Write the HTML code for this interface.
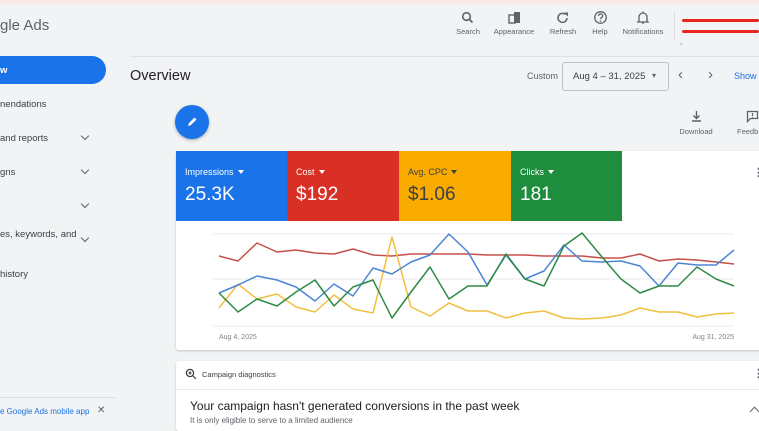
<!DOCTYPE html>
<html><head><meta charset="utf-8"><style>
*{margin:0;padding:0;box-sizing:border-box}
body{width:759px;height:427px;overflow:hidden;background:#f1f3f4;font-family:"Liberation Sans",sans-serif;color:#3c4043;position:relative}
.a{position:absolute;white-space:nowrap}
.hl{font-size:7.5px;color:#5f6368;text-align:center;width:60px}
.nav{font-size:9.5px;color:#3c4043}
.chev{position:absolute;width:6px;height:6px;border-right:1.3px solid #5f6368;border-bottom:1.3px solid #5f6368;transform:rotate(45deg)}
.tile{position:absolute;top:151px;height:70px;width:112px;color:#fff}
.tile .l{position:absolute;left:9px;top:16px;font-size:9px}
.tile .v{position:absolute;left:9px;top:33px;font-size:19px}
.tri{display:inline-block;width:0;height:0;border-left:3.5px solid transparent;border-right:3.5px solid transparent;border-top:4px solid currentColor;margin-left:4px;vertical-align:1px}
</style></head><body>
<div class="a" style="left:0;top:0;width:759px;height:4px;background:#fce8e6"></div>
<div class="a" style="left:0;top:17px;font-size:15px;color:#5f6368">gle Ads</div>

<svg class="a" style="left:460px;top:11px" width="16" height="14" viewBox="0 0 16 14"><circle cx="6.5" cy="5.5" r="3.8" fill="none" stroke="#5f6368" stroke-width="1.6"/><path d="M9.3 8.3L12.5 11.5" stroke="#5f6368" stroke-width="1.8"/></svg>
<div class="a hl" style="left:438px;top:27px">Search</div>
<svg class="a" style="left:507px;top:11px" width="16" height="14" viewBox="0 0 16 14"><rect x="2" y="4" width="6" height="8" fill="none" stroke="#5f6368" stroke-width="1.4"/><rect x="7" y="1" width="6" height="11" fill="#5f6368"/></svg>
<div class="a hl" style="left:484px;top:27px">Appearance</div>
<svg class="a" style="left:556px;top:11px" width="14" height="14" viewBox="0 0 14 14"><path d="M11 7A4.5 4.5 0 1 1 9.5 3.5" fill="none" stroke="#5f6368" stroke-width="1.5"/><path d="M8 1.5H12V5.5Z" fill="#5f6368"/></svg>
<div class="a hl" style="left:533px;top:27px">Refresh</div>
<svg class="a" style="left:593px;top:10px" width="15" height="15" viewBox="0 0 15 15"><circle cx="7.5" cy="7.5" r="5.8" fill="none" stroke="#5f6368" stroke-width="1.3"/><path d="M5.6 6a2 2 0 1 1 2.6 1.8c-.6.3-.7.7-.7 1.3" fill="none" stroke="#5f6368" stroke-width="1.3"/><circle cx="7.5" cy="11" r=".8" fill="#5f6368"/></svg>
<div class="a hl" style="left:570px;top:27px">Help</div>
<svg class="a" style="left:636px;top:10px" width="14" height="15" viewBox="0 0 14 15"><path d="M3 11V7a4 4 0 0 1 8 0v4l1 1H2z" fill="none" stroke="#5f6368" stroke-width="1.3"/><path d="M6 13h2" stroke="#5f6368" stroke-width="1.3"/><path d="M7 1.5v1.5" stroke="#5f6368" stroke-width="1.3"/></svg>
<div class="a hl" style="left:613px;top:27px">Notifications</div>
<div class="a" style="left:674px;top:12px;width:1px;height:28px;background:#dadce0"></div>
<div class="a" style="left:682px;top:19px;width:77px;height:3px;background:#e8261e;border-radius:2px"></div>
<div class="a" style="left:682px;top:30px;width:77px;height:3px;background:#e8261e;border-radius:2px"></div>
<div class="a" style="left:680px;top:44px;font-size:7px;color:#1a73e8">ˇ</div>
<div class="a" style="left:130px;top:56px;width:629px;height:1px;background:#dfe1e5"></div>

<div class="a" style="left:-20px;top:56px;width:126px;height:28px;background:#1a73e8;border-radius:14px"></div>
<div class="a nav" style="left:0;top:65px;color:#fff;font-weight:bold">w</div>
<div class="a nav" style="left:0;top:99px">nendations</div>
<div class="a nav" style="left:0;top:133px">and reports</div><div class="chev" style="left:82px;top:133px"></div>
<div class="a nav" style="left:0;top:167px">gns</div><div class="chev" style="left:82px;top:167px"></div>
<div class="chev" style="left:82px;top:201px"></div>
<div class="a nav" style="left:0;top:229px">es, keywords, and</div><div class="chev" style="left:82px;top:235px"></div>
<div class="a nav" style="left:0;top:269px">history</div>
<div class="a" style="left:0;top:397px;width:115px;height:1px;background:#dadce0"></div>
<div class="a" style="left:0;top:407px;font-size:8px;color:#1a73e8">e Google Ads mobile app</div>
<div class="a" style="left:97px;top:405px;font-size:10px;color:#5f6368">✕</div>

<div class="a" style="left:130px;top:68px;font-size:14.5px;color:#202124">Overview</div>
<div class="a" style="left:527px;top:71px;font-size:9px;color:#5f6368">Custom</div>
<div class="a" style="left:562px;top:62px;width:107px;height:29px;border:1px solid #bdc1c6;border-radius:3px"></div>
<div class="a" style="left:573px;top:71px;font-size:9.5px;color:#3c4043">Aug 4 – 31, 2025</div>
<div class="a" style="left:652px;top:71px;font-size:8px;color:#5f6368">▾</div>
<div class="a" style="left:678px;top:66px;font-size:15px;color:#5f6368">‹</div>
<div class="a" style="left:708px;top:66px;font-size:15px;color:#5f6368">›</div>
<div class="a" style="left:734px;top:71px;font-size:9px;color:#1a73e8">Show</div>

<div class="a" style="left:175px;top:105px;width:34px;height:34px;border-radius:50%;background:#1a73e8;box-shadow:0 1px 3px rgba(0,0,0,.3)"></div>
<svg class="a" style="left:185px;top:115px" width="14" height="14" viewBox="0 0 14 14"><path d="M3 11L4 8L9.5 2.5L11.5 4.5L6 10Z" fill="#fff"/></svg>
<svg class="a" style="left:690px;top:110px" width="13" height="13" viewBox="0 0 13 13"><path d="M6.5 1v7M3.5 5.5l3 3 3-3M2 11h9" fill="none" stroke="#5f6368" stroke-width="1.4"/></svg>
<div class="a hl" style="left:666px;top:127px">Download</div>
<svg class="a" style="left:746px;top:110px" width="13" height="13" viewBox="0 0 13 13"><path d="M1.5 1.5h10v7h-7l-3 3z" fill="none" stroke="#5f6368" stroke-width="1.3"/><path d="M6.5 3v3M6.5 7v.8" stroke="#5f6368" stroke-width="1.2"/></svg>
<div class="a" style="left:737px;top:127px;font-size:7.5px;color:#5f6368">Feedb</div>

<div class="a" style="left:176px;top:151px;width:600px;height:199px;background:#fff;border-radius:3px;box-shadow:0 1px 2px rgba(0,0,0,.2)"></div>
<div class="tile" style="left:176px;background:#1a73e8"><div class="l">Impressions<span class="tri"></span></div><div class="v">25.3K</div></div>
<div class="tile" style="left:287px;background:#d93025"><div class="l">Cost<span class="tri"></span></div><div class="v">$192</div></div>
<div class="tile" style="left:399px;background:#f9ab00;color:#3c4043"><div class="l">Avg. CPC<span class="tri"></span></div><div class="v">$1.06</div></div>
<div class="tile" style="left:511px;background:#1e8e3e;width:111px"><div class="l">Clicks<span class="tri"></span></div><div class="v">181</div></div>
<div class="a" style="left:753px;top:166px;font-size:11px;font-weight:bold;color:#5f6368">⋮</div>

<svg class="a" style="left:0;top:0" width="759" height="427">
<g stroke="#e8eaed" stroke-width="1"><line x1="213" y1="234" x2="734" y2="234"/><line x1="213" y1="279" x2="734" y2="279"/><line x1="213" y1="326" x2="734" y2="326"/></g>
<g fill="none" stroke-width="1.5" stroke-linejoin="round">
<polyline stroke="#c5504a" points="219,256 238,261 257,243 277,252 296,250 315,253 334,254 353,249 373,255 392,256 411,254 430,254 449,254 468,254 487,255 506,255 525,255 544,256 564,256 582,256 602,258 621,258 640,254 659,261 678,259 697,260 716,262 734,264"/>
<polyline stroke="#f2c040" points="219,308 238,284 257,299 277,294 296,307 315,312 334,295 353,309 373,313 392,237 411,307 430,316 449,303 468,311 487,311 506,318 525,313 544,311 564,318 582,319 602,318 621,315 640,308 659,312 678,312 697,317 716,314 734,313"/>
<polyline stroke="#4a86d4" points="219,293 238,285 257,276 277,280 296,287 315,301 334,284 353,296 373,268 392,274 411,262 430,255 449,234 468,252 487,285 506,255 525,279 544,271 564,245 582,261 602,262 621,261 640,266 659,286 678,263 697,265 716,265 734,250"/>
<polyline stroke="#2f8a46" points="219,293 238,312 257,299 277,306 296,292 315,280 334,306 353,287 373,280 392,318 411,292 430,267 449,299 468,286 487,286 506,254 525,279 544,286 564,246 582,233 602,257 621,279 640,293 659,286 678,286 697,267 716,279 734,286"/>
</g>
<text x="219" y="339" font-size="7" fill="#80868b" font-family="Liberation Sans">Aug 4, 2025</text>
<text x="734" y="339" font-size="7" fill="#80868b" font-family="Liberation Sans" text-anchor="end">Aug 31, 2025</text>
</svg>

<div class="a" style="left:176px;top:361px;width:600px;height:70px;background:#fff;border-radius:3px;box-shadow:0 1px 2px rgba(0,0,0,.2)"></div>
<div class="a" style="left:176px;top:389px;width:600px;height:1px;background:#e8eaed"></div>
<svg class="a" style="left:185px;top:368px" width="12" height="12" viewBox="0 0 12 12"><circle cx="5" cy="5" r="3.6" fill="none" stroke="#3c4043" stroke-width="1.3"/><path d="M7.6 7.6L11 11M3.5 5h3M5 3.5v3" stroke="#3c4043" stroke-width="1.2"/></svg>
<div class="a" style="left:202px;top:370px;font-size:7.5px;color:#3c4043">Campaign diagnostics</div>
<div class="a" style="left:753px;top:367px;font-size:11px;font-weight:bold;color:#5f6368">⋮</div>
<div class="a" style="left:190px;top:399px;font-size:12px;color:#202124">Your campaign hasn't generated conversions in the past week</div>
<div class="a" style="left:190px;top:416px;font-size:8px;color:#5f6368">It is only eligible to serve to a limited audience</div>
<div class="a" style="left:751px;top:408px;width:7px;height:7px;border-left:1.3px solid #5f6368;border-top:1.3px solid #5f6368;transform:rotate(45deg)"></div>
</body></html>
